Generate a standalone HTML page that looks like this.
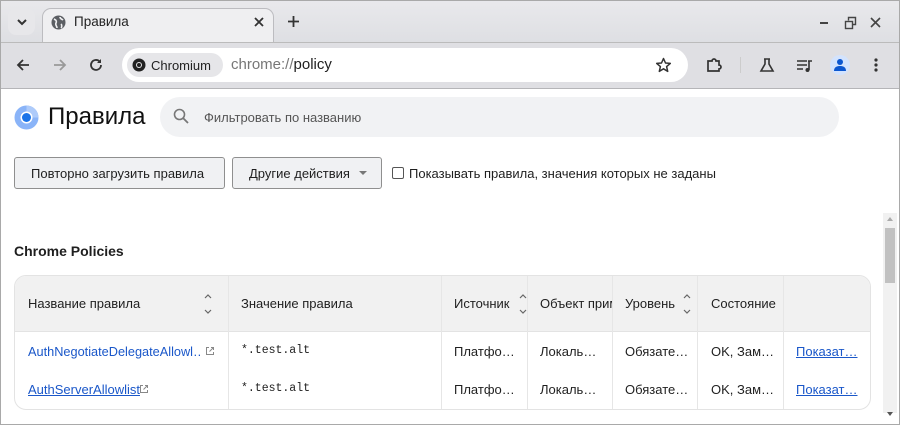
<!DOCTYPE html>
<html><head><meta charset="utf-8"><style>
*{box-sizing:border-box;margin:0;padding:0}
body{width:900px;height:425px;overflow:hidden;font-family:"Liberation Sans",sans-serif;background:#fff;position:relative;color:#1f1f1f}
.abs{position:absolute}
.cond{transform-origin:left center;display:inline-block}
.win{position:absolute;left:0;top:0;width:900px;height:425px;border:1px solid #a9a9a9;pointer-events:none}
.t{position:absolute;white-space:nowrap;font-size:13px}
.col{position:absolute;top:276px;bottom:0;width:1px;background:#e6e6e6}
</style></head><body>
<div class="abs" style="left:0;top:0;width:900px;height:42px;background:linear-gradient(#e9e9ec,#dedfe3)"></div>
<div class="abs" style="left:8px;top:8px;width:27px;height:27px;border-radius:8px;background:#e7e7ea"></div>
<svg class="abs" style="left:15px;top:15px" width="14" height="14"><path d="M3 5l4 4 4-4" stroke="#333" stroke-width="2" fill="none"/></svg>
<div class="abs" style="left:42px;top:8px;width:232px;height:36px;background:#efeff1;border:1px solid #bcbcc0;border-bottom:none;border-radius:9px 9px 0 0"></div>
<svg class="abs" style="left:51px;top:15px" width="15" height="15"><circle cx="7.5" cy="7.5" r="7" fill="#5b5e63"/><path d="M3 4c2 1 3 2 2 4s1 3 1 5M9 2c0 2 2 2 3 3M10 9c1 1 1 3 0 4" stroke="#efeff1" stroke-width="1.6" fill="none"/></svg>
<div class="t" style="left:74px;top:14px;font-size:13.5px;color:#222">Правила</div>
<svg class="abs" style="left:254px;top:17px" width="10" height="10"><path d="M1 1l8 8M9 1l-8 8" stroke="#333" stroke-width="1.8"/></svg>
<svg class="abs" style="left:287px;top:15px" width="13" height="13"><path d="M6.5 1v11M1 6.5h11" stroke="#333" stroke-width="1.8"/></svg>
<div class="abs" style="left:820px;top:22px;width:8px;height:2px;background:#444"></div>
<svg class="abs" style="left:844px;top:16px" width="14" height="14"><rect x="1.5" y="5.5" width="7" height="7" fill="none" stroke="#444" stroke-width="1.4"/><path d="M4.5 4.5V1.5h7v7h-3" fill="none" stroke="#444" stroke-width="1.4"/></svg>
<svg class="abs" style="left:870px;top:17px" width="11" height="11"><path d="M1 1l9 9M10 1l-9 9" stroke="#444" stroke-width="1.6"/></svg>
<div class="abs" style="left:0;top:42px;width:900px;height:47px;background:#dfdfe3;border-top:1px solid #bbb;border-bottom:1px solid #b5b5b8"></div>
<svg class="abs" style="left:15px;top:57px" width="16" height="16"><path d="M14 8H3M8 3L3 8l5 5" stroke="#333" stroke-width="1.8" fill="none"/></svg>
<svg class="abs" style="left:52px;top:57px" width="16" height="16"><path d="M2 8h11M8 3l5 5-5 5" stroke="#999" stroke-width="1.8" fill="none"/></svg>
<svg class="abs" style="left:88px;top:57px" width="16" height="16"><path d="M13 8a5 5 0 1 1-1.5-3.6" stroke="#333" stroke-width="1.8" fill="none"/><path d="M9 6h4V2z" fill="#333"/></svg>
<div class="abs" style="left:122px;top:48px;width:566px;height:34px;border-radius:17px;background:#fff"></div>
<div class="abs" style="left:127px;top:53px;width:96px;height:24px;border-radius:12px;background:#e6e6e9"></div>
<svg class="abs" style="left:132px;top:58px" width="14" height="14"><circle cx="7" cy="7" r="6.5" fill="#222"/><circle cx="7" cy="7" r="3" fill="#e6e6e9"/><circle cx="7" cy="7" r="2" fill="#222"/></svg>
<div class="t" style="left:151px;top:58px;font-size:13px;color:#222">Chromium</div>
<div class="t" style="left:231px;top:56px;font-size:15px;color:#777">chrome://<span style="color:#1f1f1f">policy</span></div>
<svg class="abs" style="left:655px;top:57px" width="17" height="16"><path d="M8.5 1.5l2 4.5 4.8.4-3.7 3.2 1.1 4.8-4.2-2.6-4.2 2.6 1.1-4.8L1.7 6.4l4.8-.4z" fill="none" stroke="#333" stroke-width="1.5" stroke-linejoin="round"/></svg>
<svg class="abs" style="left:706px;top:57px" width="17" height="16"><path d="M2 4h4a2 2 0 0 1 4 0h3v4a2 2 0 0 1 0 4v2H2z" fill="none" stroke="#333" stroke-width="1.7"/></svg>
<div class="abs" style="left:740px;top:57px;width:1px;height:16px;background:#ccc"></div>
<svg class="abs" style="left:759px;top:57px" width="16" height="16"><path d="M5 2h6M6 2v5L2 14h12L10 7V2" fill="none" stroke="#333" stroke-width="1.6"/></svg>
<svg class="abs" style="left:796px;top:58px" width="17" height="15"><path d="M1 3h10M1 7h10M1 11h6" stroke="#333" stroke-width="1.6"/><path d="M12 3h4M13 3v9" stroke="#333" stroke-width="1.6"/><circle cx="11.5" cy="12" r="2" fill="#333"/></svg>
<div class="abs" style="left:830px;top:55px;width:20px;height:20px;border-radius:50%;background:#d3e3fd"></div>
<svg class="abs" style="left:833px;top:58px" width="14" height="14"><circle cx="7" cy="4" r="3" fill="#0b57d0"/><path d="M1 13c0-4 3-5 6-5s6 1 6 5z" fill="#0b57d0"/></svg>
<svg class="abs" style="left:873px;top:57px" width="6" height="16"><circle cx="3" cy="3" r="1.6" fill="#333"/><circle cx="3" cy="8" r="1.6" fill="#333"/><circle cx="3" cy="13" r="1.6" fill="#333"/></svg>

<svg class="abs" style="left:14px;top:105px" width="25" height="25"><circle cx="12.5" cy="12.5" r="12" fill="#8ab4f8"/><path d="M12.5 .5A12 12 0 0 1 24.5 12.5H12.5z" fill="#aecbfa"/><circle cx="12.5" cy="12.5" r="6" fill="#fff"/><circle cx="12.5" cy="12.5" r="4.5" fill="#1a73e8"/></svg>
<div class="t" style="left:48px;top:103px;font-size:24px;color:#111">Правила</div>
<div class="abs" style="left:160px;top:97px;width:679px;height:40px;border-radius:20px;background:#f1f2f4"></div>
<svg class="abs" style="left:173px;top:108px" width="17" height="17"><circle cx="6.5" cy="6.5" r="5" stroke="#777" stroke-width="1.6" fill="none"/><path d="M10 10l5 5" stroke="#777" stroke-width="1.8"/></svg>
<div class="t" style="left:204px;top:110px;color:#555">Фильтровать по названию</div>

<div class="abs" style="left:14px;top:157px;width:211px;height:32px;border:1px solid #8f8f8f;border-radius:3px;background:#f0f1f3"></div>
<div class="t" style="left:31px;top:166px">Повторно загрузить правила</div>
<div class="abs" style="left:232px;top:157px;width:150px;height:32px;border:1px solid #8f8f8f;border-radius:3px;background:#f0f1f3"></div>
<div class="t" style="left:249px;top:166px">Другие действия</div>
<div class="abs" style="left:359px;top:171px;border:4px solid transparent;border-top:4px solid #777"></div>
<div class="abs" style="left:392px;top:167px;width:12px;height:12px;border:1px solid #555;border-radius:2px"></div>
<div class="t" style="left:409px;top:166px">Показывать правила, значения которых не заданы</div>

<div class="t" style="left:14px;top:243px;font-weight:bold;font-size:14px">Chrome Policies</div>

<div class="abs" style="left:883px;top:213px;width:14px;height:200px;background:#f1f1f1"></div>
<div class="abs" style="left:885px;top:228px;width:10px;height:55px;background:#c1c1c1"></div>
<div class="abs" style="left:887px;top:217px;border:3px solid transparent;border-bottom:4px solid #aaa;border-top:none"></div>
<div class="abs" style="left:887px;top:412px;border:3px solid transparent;border-top:4px solid #555;border-bottom:none"></div>

<div class="abs" style="left:14px;top:275px;width:857px;height:135px;border:1px solid #e3e3e3;border-radius:12px;overflow:hidden">
<div class="abs" style="left:0;top:0;width:857px;height:56px;background:#f1f1f1;border-bottom:1px solid #e3e3e3"></div>
</div>
<div class="col" style="left:228px;top:276px;height:133px"></div>
<div class="col" style="left:441px;top:276px;height:133px"></div>
<div class="col" style="left:527px;top:276px;height:133px"></div>
<div class="col" style="left:612px;top:276px;height:133px"></div>
<div class="col" style="left:697px;top:276px;height:133px"></div>
<div class="col" style="left:783px;top:276px;height:133px"></div>
<div class="t" style="left:28px;top:296px">Название правила</div>
<div class="t" style="left:241px;top:296px">Значение правила</div>
<div class="t" style="left:454px;top:296px">Источник</div>
<div class="t" style="left:540px;top:296px;width:72px;overflow:hidden">Объект применения</div>
<div class="t" style="left:625px;top:296px">Уровень</div>
<div class="t" style="left:711px;top:296px">Состояние</div>
<svg class="abs" style="left:203px;top:292px" width="10" height="24"><path d="M2 6l3-3 3 3M2 18l3 3 3-3" stroke="#666" stroke-width="1.2" fill="none"/></svg>
<svg class="abs" style="left:518px;top:292px" width="10" height="24"><path d="M2 6l3-3 3 3M2 18l3 3 3-3" stroke="#666" stroke-width="1.2" fill="none"/></svg>
<svg class="abs" style="left:682px;top:292px" width="10" height="24"><path d="M2 6l3-3 3 3M2 18l3 3 3-3" stroke="#666" stroke-width="1.2" fill="none"/></svg>

<div class="t" style="left:28px;top:344px;color:#1a57c9;text-decoration:underline;width:174px;overflow:hidden"><span class="cond" style="transform:scaleX(.98)">AuthNegotiateDelegateAllowl…</span></div>
<svg class="abs" style="left:205px;top:346px" width="10" height="10"><path d="M4 1.5H1.5v7h7V6M6 1.5h2.5V4M8.5 1.5L4.5 5.5" stroke="#888" fill="none"/></svg>
<div class="t" style="left:28px;top:382px;color:#1a57c9;text-decoration:underline">AuthServerAllowlist</div>
<svg class="abs" style="left:139px;top:384px" width="10" height="10"><path d="M4 1.5H1.5v7h7V6M6 1.5h2.5V4M8.5 1.5L4.5 5.5" stroke="#888" fill="none"/></svg>
<div class="t" style="left:241px;top:344px;font-family:'Liberation Mono',monospace;font-size:11.5px">*.test.alt</div>
<div class="t" style="left:241px;top:382px;font-family:'Liberation Mono',monospace;font-size:11.5px">*.test.alt</div>
<div class="t" style="left:454px;top:344px">Платфо…</div>
<div class="t" style="left:454px;top:382px">Платфо…</div>
<div class="t" style="left:540px;top:344px">Локаль…</div>
<div class="t" style="left:540px;top:382px">Локаль…</div>
<div class="t" style="left:625px;top:344px">Обязате…</div>
<div class="t" style="left:625px;top:382px">Обязате…</div>
<div class="t" style="left:711px;top:344px">OK, Зам…</div>
<div class="t" style="left:711px;top:382px">OK, Зам…</div>
<div class="t" style="left:796px;top:344px;color:#1a57c9;text-decoration:underline">Показат…</div>
<div class="t" style="left:796px;top:382px;color:#1a57c9;text-decoration:underline">Показат…</div>
<div class="win"></div>
</body></html>
